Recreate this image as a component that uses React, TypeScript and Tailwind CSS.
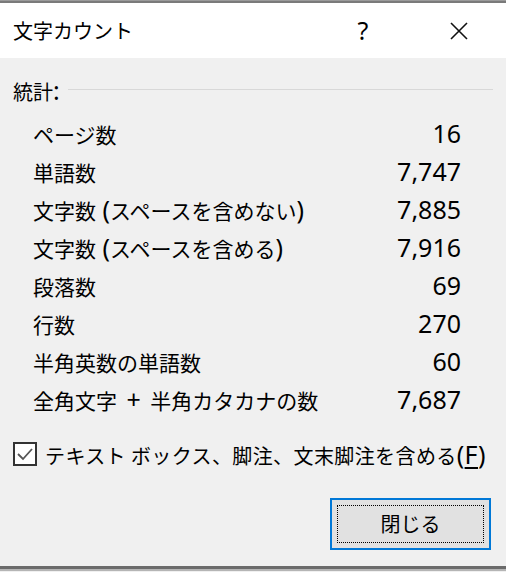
import type { ReactNode } from "react";

// Latin glyphs are drawn bigger than the kana/kanji, like Meiryo UI does
const L = ({ children }: { children: ReactNode }) => (
  <span className="font-['Noto_Sans',sans-serif] text-[25px]">{children}</span>
);

const stats: { label: ReactNode; value: string }[] = [
  { label: "ページ数", value: "16" },
  { label: "単語数", value: "7,747" },
  { label: <>文字数<L> (</L>スペースを含めない<L>)</L></>, value: "7,885" },
  { label: <>文字数<L> (</L>スペースを含める<L>)</L></>, value: "7,916" },
  { label: "段落数", value: "69" },
  { label: "行数", value: "270" },
  { label: "半角英数の単語数", value: "60" },
  { label: <>全角文字<L> <span className="mx-[3px]">+</span> </L>半角カタカナの数</>, value: "7,687" },
];

export default function App() {
  return (
    <div className="w-[506px] h-[572px] overflow-hidden bg-[#f0f0f0] text-black font-['Noto_Sans_CJK_JP','Noto_Sans',sans-serif]">
      {/* window behind the dialog, cut off at the top */}
      <div className="h-[1px] bg-[#9a9a9a]" />
      <div className="h-[2px] bg-[#7a7a7a]" />

      {/* title bar */}
      <div className="h-[55px] bg-white flex items-center pl-[13px]">
        <span className="text-[20px] leading-none">文字カウント</span>
        <span className="ml-auto w-[20px] text-center font-['Noto_Sans',sans-serif] text-[25px] leading-none">?</span>
        <button className="ml-[76px] mr-[37px] w-[20px] h-[20px] flex items-center justify-center">
          <svg width="20" height="20" viewBox="0 0 20 20" fill="none" stroke="#111" strokeWidth="1.6">
            <path d="M2 2 L18 18 M18 2 L2 18" />
          </svg>
        </button>
      </div>

      {/* body */}
      <div className="pt-[13px] pb-[16px]">
        <div className="h-[38px] flex items-center pl-[13px] pr-[13px] gap-[8px]">
          <span className="text-[20px] leading-none">
            統計<L>:</L>
          </span>
          <div className="flex-1 h-px bg-[#d8d8d8] mt-[-2px]" />
        </div>

        <div className="mt-[5px] pl-[33px] pr-[45px]">
          {stats.map((s) => (
            <div key={s.value} className="h-[38px] flex items-center">
              <div className="w-full flex items-baseline justify-between text-[21px] leading-none">
                <span>{s.label}</span>
                <L>{s.value}</L>
              </div>
            </div>
          ))}
        </div>

        <label className="mt-[17px] h-[38px] flex items-center pl-[13px] gap-[8px]">
          <span className="w-[24px] h-[24px] border-2 border-[#333] bg-white flex items-center justify-center">
            <svg width="20" height="20" viewBox="0 0 20 20" fill="none" stroke="#555" strokeWidth="1.8">
              <path d="M3 10 L8 15 L17 5" />
            </svg>
          </span>
          <span className="text-[20px] leading-none tracking-[0.4px]">
            テキスト ボックス、脚注、文末脚注を含める<L>(<span className="underline underline-offset-[3px] decoration-[1.5px]">F</span>)</L>
          </span>
        </label>

        <div className="mt-[25px] flex justify-end pr-[15px]">
          <button className="w-[161px] h-[52px] border-2 border-[#0078d7] bg-[#e1e1e1] p-[5px]">
            <span className="w-full h-full flex items-center justify-center border border-dotted border-black text-[20px] leading-none">
              閉じる
            </span>
          </button>
        </div>
      </div>

      <div className="h-[3px] bg-[#6b6b6b]" />
      <div className="h-[2px] bg-[#b5b5b5]" />
    </div>
  );
}
